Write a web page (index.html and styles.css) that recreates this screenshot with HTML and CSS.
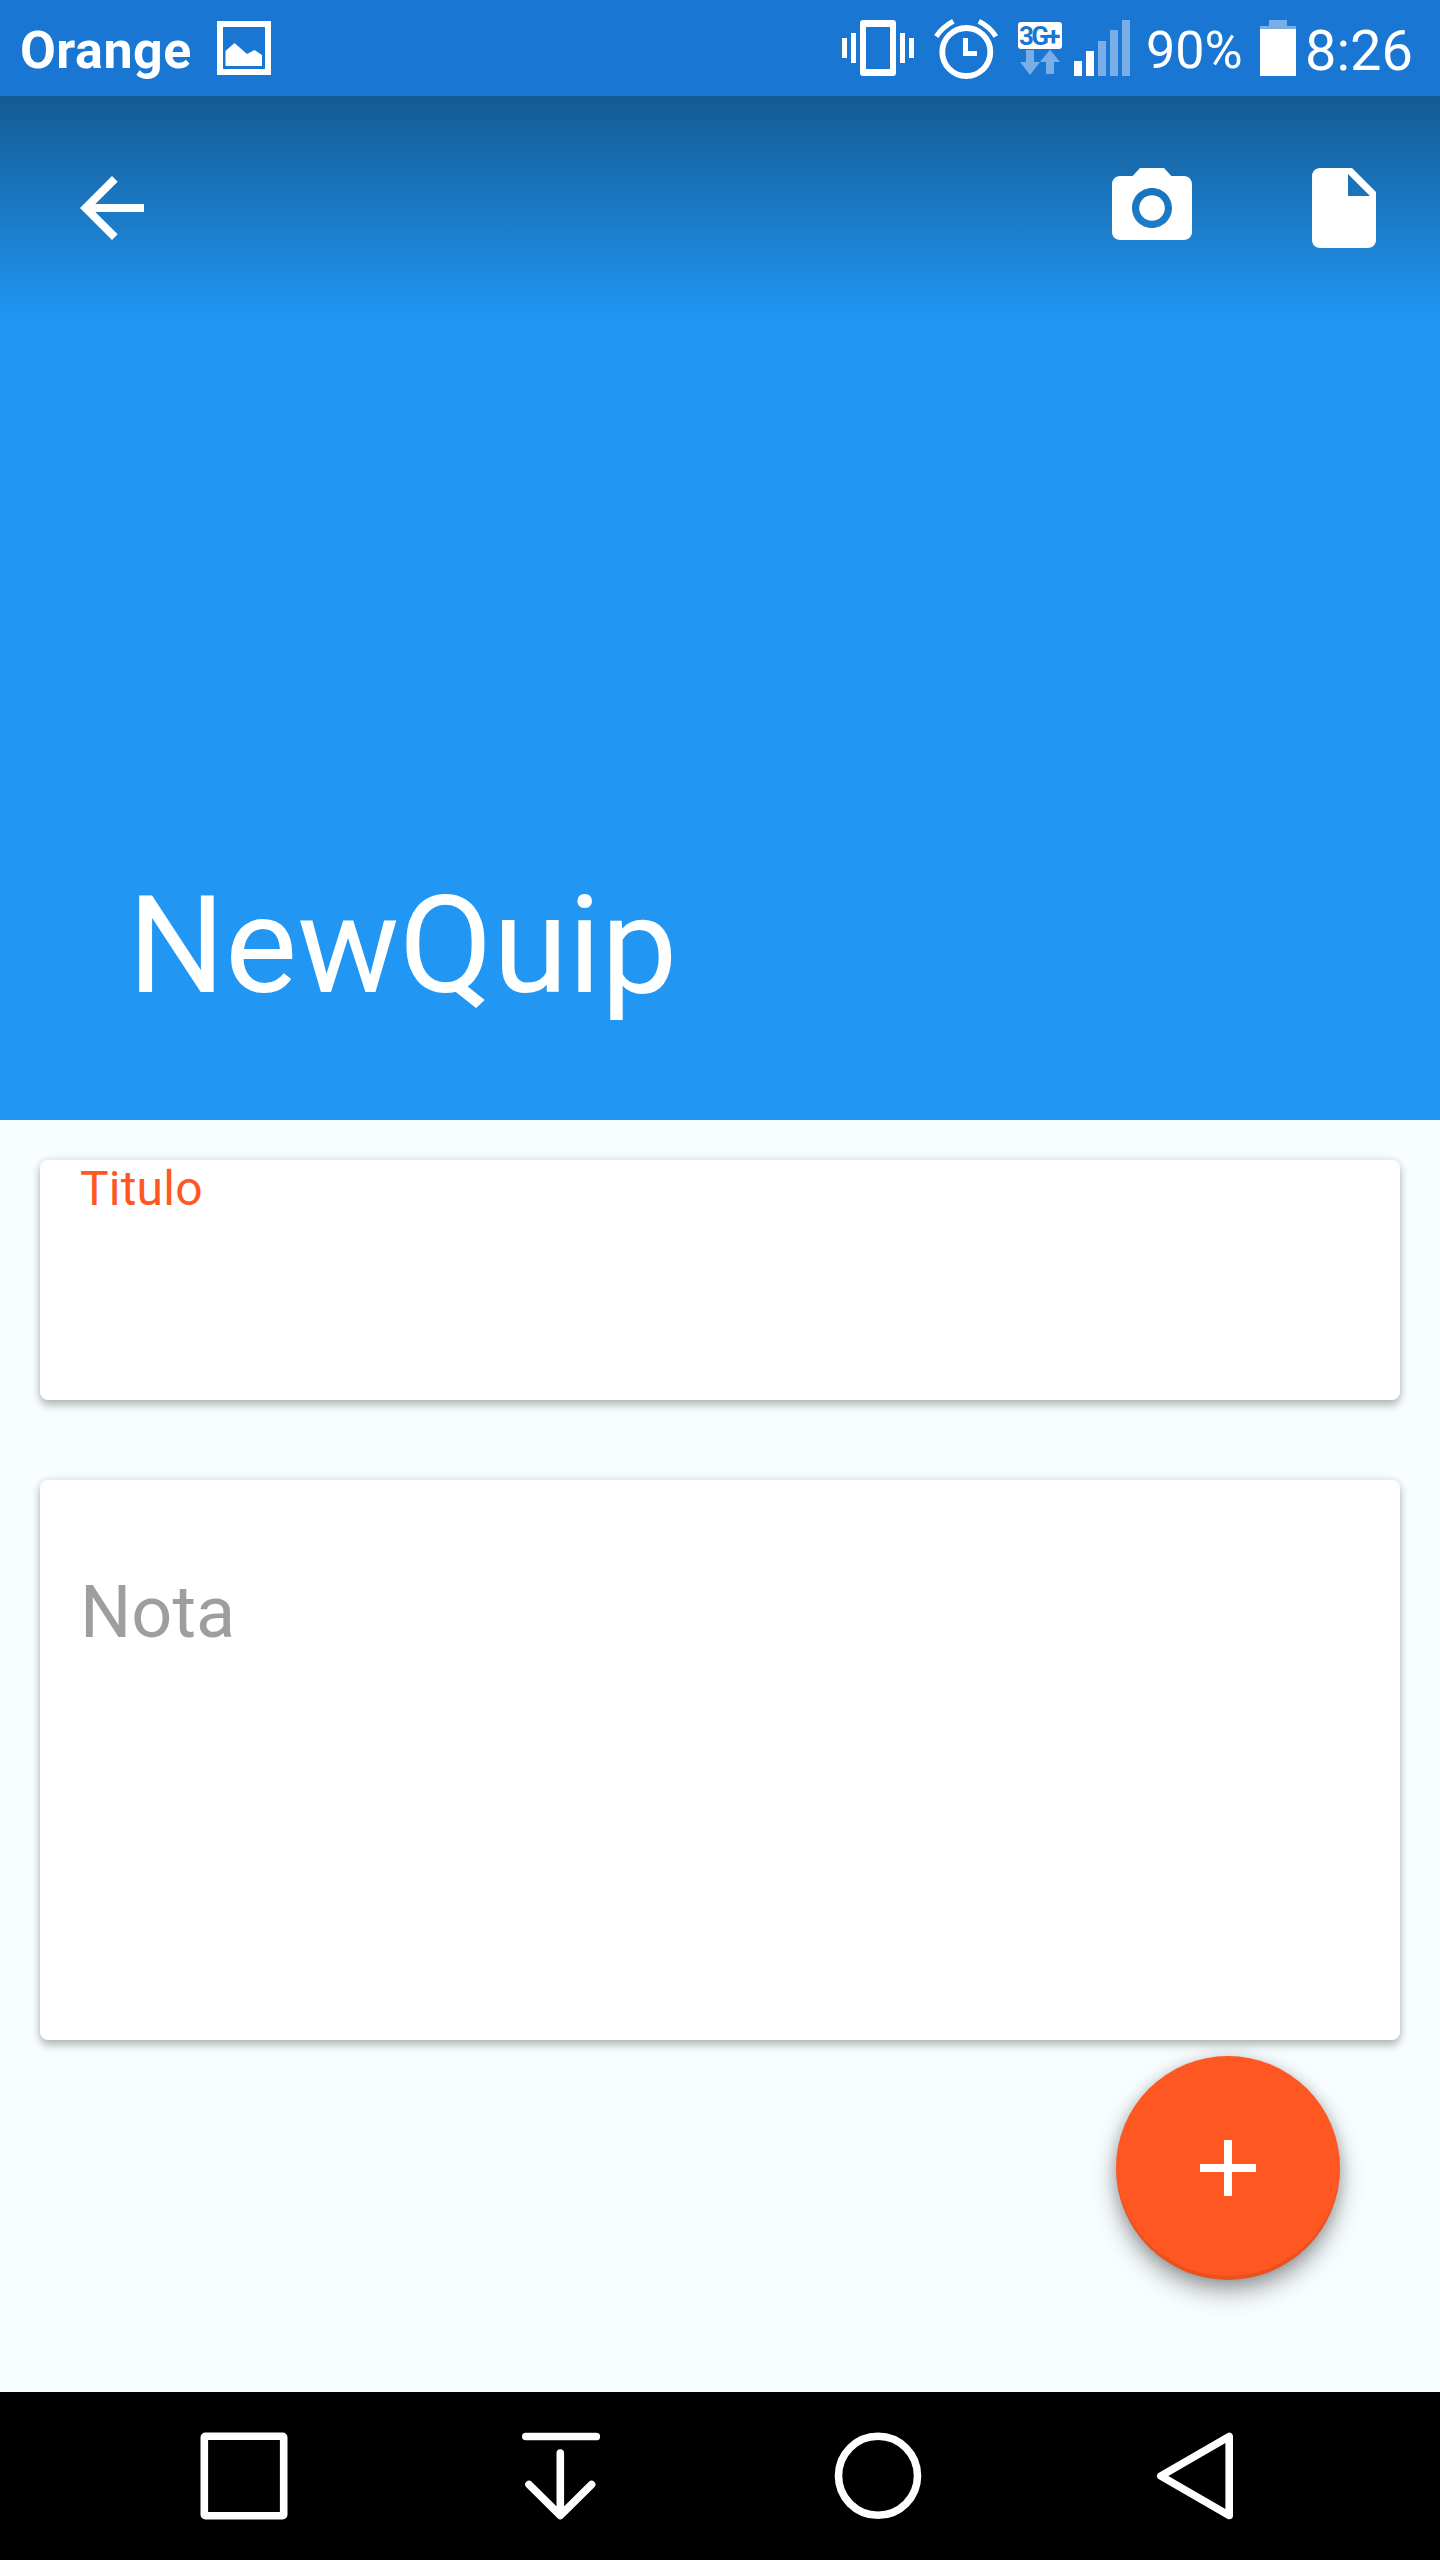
FILE: index.html
```html
<!DOCTYPE html>
<html lang="es">
<head>
<meta charset="utf-8">
<title>NewQuip</title>
<link rel="stylesheet" href="styles.css">
</head>
<body>
<div class="screen">
  <div class="status">
    <span class="carrier">Orange</span>
    <svg class="picture" width="54" height="96" viewBox="217 0 54 96">
      <path d="M220 24h48v48h-48z" fill="none" stroke="#fff" stroke-width="6"/>
      <path d="M225.5 66V51l9-8L247 54l7.500-4 7.500 5v11z" fill="#fff"/>
    </svg>
    <svg class="vibrate" width="72" height="96" viewBox="842 0 72 96" fill="#fff">
      <path d="M842 38h5v20h-5zM851 33h5v30h-5zM900 33h5v30h-5zM909 38h5v20h-5z"/>
      <path fill-rule="evenodd" d="M863 20h30q3 0 3 3v50q0 3-3 3h-30q-3 0-3-3V23q0-3 3-3zM866 27v42h24V27z"/>
    </svg>
    <svg class="alarm" width="64" height="96" viewBox="934 0 64 96">
      <circle cx="966.3" cy="52" r="24" fill="none" stroke="#fff" stroke-width="5.800"/>
      <path d="M963 38h5v13h9v5h-14z" fill="#fff"/>
      <path d="M936.300 36.500Q942.500 27 953.300 21.300M995.800 36.500Q990 27 978.800 21.300" fill="none" stroke="#fff" stroke-width="5.200"/>
    </svg>
    <svg class="network" width="44" height="96" viewBox="1018 0 44 96">
      <rect x="1018" y="22" width="44" height="27" rx="3" fill="#fff"/>
      <text class="network-label" x="1019" y="44.500" textLength="41.500">3G+</text>
      <path class="dim" d="M1026 50h8v12h6l-10 13-10-13h6zM1050 49.500l10 12.500h-6v12h-8V62h-6z"/>
    </svg>
    <svg class="signal" width="56" height="96" viewBox="1074 0 56 96">
      <path d="M1074 61h8v15h-8zM1086 51h8v25h-8z" fill="#fff"/>
      <path class="dim" d="M1098 41h8v35h-8zM1110 30h8v46h-8zM1122 20h8v56h-8z"/>
    </svg>
    <span class="percent">90%</span>
    <svg class="battery" width="36" height="96" viewBox="1260 0 36 96">
      <path class="dim" d="M1269 20h18v6h9v3h-36v-3h9z"/>
      <path d="M1260 29h36v47h-36z" fill="#fff"/>
    </svg>
    <span class="clock">8:26</span>
  </div>

  <header class="header">
    <div class="toolbar">
      <svg width="96" height="96" viewBox="0 0 24 24" fill="#fff"><path d="M20 11H7.830l5.590-5.590L12 4l-8 8 8 8 1.410-1.410L7.830 13H20v-2z"/></svg>
      <div class="actions">
        <svg width="96" height="96" viewBox="0 0 24 24" fill="#fff"><circle cx="12" cy="12" r="3.200"/><path d="M9 2L7.170 4H4c-1.100 0-2 .9-2 2v12c0 1.100.9 2 2 2h16c1.100 0 2-.9 2-2V6c0-1.100-.9-2-2-2h-3.170L15 2H9zm3 15c-2.760 0-5-2.240-5-5s2.240-5 5-5 5 2.240 5 5-2.240 5-5 5z"/></svg>
        <svg width="96" height="96" viewBox="0 0 24 24" fill="#fff"><path d="M6 2c-1.100 0-1.990.9-1.990 2L4 20c0 1.100.89 2 1.990 2H18c1.100 0 2-.9 2-2V8l-6-6H6zm7 7V3.500L18.500 9H13z"/></svg>
      </div>
    </div>
    <h1 class="title">NewQuip</h1>
  </header>

  <main class="content">
    <section class="card card-title"><label class="floating">Titulo</label></section>
    <section class="card card-note"><label class="hint">Nota</label></section>
    <button class="fab" aria-label="Add">
      <svg width="96" height="96" viewBox="0 0 24 24" fill="#fff"><path d="M19 13h-6v6h-2v-6H5v-2h6V5h2v6h6v2z"/></svg>
    </button>
  </main>

  <nav class="nav">
    <svg width="88" height="88" viewBox="0 0 88 88"><rect x="4.300" y="4.300" width="79.400" height="79.400" rx="1"/></svg>
    <svg width="80" height="88" viewBox="0 0 80 88"><path d="M5.800 4.500h70.500M40.300 21v62M9 52.500l31.300 31 31.300-31"/></svg>
    <svg width="88" height="88" viewBox="0 0 88 88"><circle cx="44" cy="43.800" r="39.500"/></svg>
    <svg width="80" height="88" viewBox="0 0 80 88"><path d="M75.200 4.500v79L6.800 44z"/></svg>
  </nav>
</div>
</body>
</html>
```

FILE: styles.css
```css
* { box-sizing: border-box; }

body {
  margin: 0;
  font-family: Roboto, "Liberation Sans", sans-serif;
}

svg { display: block; flex: none; }

.screen {
  width: 1440px;
  height: 2560px;
  display: flex;
  flex-direction: column;
  background: #f8fdff;
}

/* Status bar */
.status {
  height: 96px;
  display: flex;
  align-items: flex-start;
  padding-left: 20px;
  background: #1976d2;
  color: #fff;
  white-space: nowrap;
}

.carrier {
  width: 197px;
  font-size: 52px;
  font-weight: 700;
  letter-spacing: 0.5px;
  line-height: 101px;
}

.vibrate { margin-left: 571px; }
.alarm { margin-left: 20px; }
.network { margin-left: 20px; }
.signal { margin-left: 12px; }

.network-label {
  font-size: 26px;
  font-weight: 700;
  fill: #1976d2;
}

.dim { fill: #79aee6; }

.percent {
  width: 130px;
  padding-left: 16px;
  font-size: 52px;
  line-height: 101px;
}

.clock {
  padding-left: 9px;
  font-size: 56px;
  line-height: 102px;
}

/* Collapsing header */
.header {
  height: 1024px;
  display: flex;
  flex-direction: column;
  justify-content: space-between;
  background: #2196f3;
  color: #fff;
}

.toolbar {
  height: 224px;
  display: flex;
  align-items: center;
  justify-content: space-between;
  padding: 0 48px 0 64px;
  background: linear-gradient(rgba(0, 0, 0, 0.4), rgba(0, 0, 0, 0));
}

.actions { display: flex; gap: 96px; }

.title {
  margin: 0 0 94px 128px;
  font-size: 136px;
  font-weight: 400;
  line-height: 160px;
}

/* Form */
.content {
  height: 1272px;
  display: flex;
  flex-direction: column;
  padding: 40px;
}

.card {
  flex: none;
  padding: 0 40px;
  border-radius: 8px;
  background: #fff;
  box-shadow: 0 6px 8px rgba(0, 0, 0, 0.22), 0 0 8px rgba(0, 0, 0, 0.14);
}

.card-title { height: 240px; padding-top: 1px; }
.card-note { height: 560px; margin-top: 80px; padding-top: 91px; }

.floating {
  display: block;
  font-size: 48px;
  letter-spacing: 0.2px;
  line-height: 56px;
  color: #ff5722;
}

.hint {
  display: block;
  font-size: 72px;
  line-height: 84px;
  color: #9e9e9e;
}

.fab {
  width: 224px;
  height: 224px;
  margin: 16px 60px 0 auto;
  padding: 0;
  display: flex;
  flex: none;
  align-items: center;
  justify-content: center;
  border: 0;
  border-radius: 50%;
  background: #ff5722;
  box-shadow: inset 0 -4px 0 rgba(0, 0, 0, 0.08), 0 12px 24px rgba(0, 0, 0, 0.34), 0 2px 14px rgba(0, 0, 0, 0.16);
}

/* Navigation bar */
.nav {
  height: 168px;
  display: flex;
  align-items: flex-start;
  padding: 40px 0 0 200px;
  background: #000;
}

.nav svg {
  fill: none;
  stroke: #fff;
  stroke-width: 7.600px;
  stroke-linecap: round;
  stroke-linejoin: round;
}

.nav svg:nth-child(2) { margin-left: 232px; }
.nav svg:nth-child(3) { margin-left: 234px; }
.nav svg:nth-child(4) { margin-left: 232px; }
```
